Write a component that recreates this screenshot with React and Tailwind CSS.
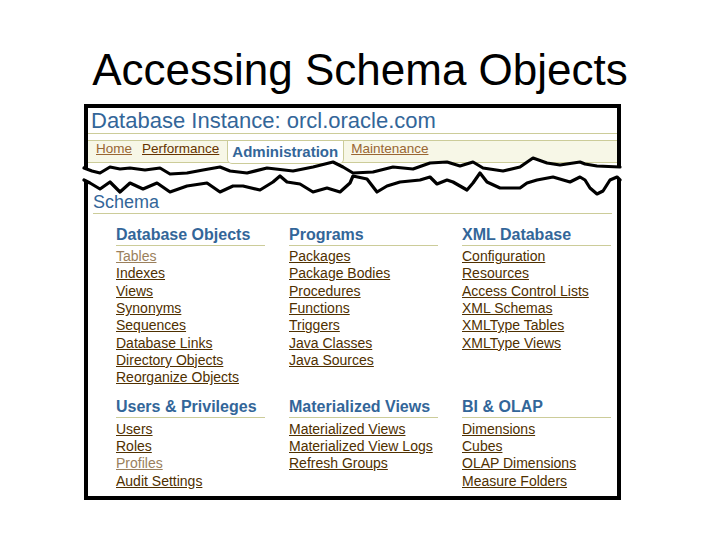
import React from "react";

const topTear = [
  [84, 168], [92, 171], [100, 173], [110, 167], [120, 169], [130, 168], [145, 170], [160, 168],
  [170, 174], [187, 173], [203, 170], [220, 167], [230, 171], [247, 173], [267, 168], [293, 171],
  [313, 167], [333, 162], [343, 167], [353, 173], [373, 172], [393, 167], [413, 169], [430, 163],
  [447, 162], [460, 166], [473, 162], [483, 168], [503, 171], [520, 167], [533, 158], [547, 163],
  [560, 165], [580, 162], [585, 164], [597, 166], [620, 167],
];

const bottomTear = [
  [84, 180], [90, 183], [100, 189], [110, 182], [120, 192], [130, 183], [143, 189], [157, 183],
  [170, 192], [187, 186], [207, 183], [220, 192], [233, 186], [243, 186], [260, 190], [273, 182],
  [280, 176], [287, 182], [300, 184], [313, 192], [327, 188], [340, 192], [350, 183], [353, 176],
  [367, 179], [377, 192], [387, 186], [400, 182], [420, 180], [430, 177], [437, 184], [447, 180],
  [453, 182], [467, 190], [473, 183], [480, 173], [487, 182], [500, 188], [520, 188], [527, 183],
  [537, 180], [553, 177], [570, 182], [580, 177], [585, 180], [590, 188], [597, 194], [603, 191],
  [610, 180], [617, 177], [620, 180],
];

const pts = (arr) => arr.map(([x, y]) => `${x},${y}`).join(" ");

// white gap between the two torn edges
const gapFill = pts([
  [78, 168],
  ...topTear,
  [627, 167],
  [627, 180],
  ...[...bottomTear].reverse(),
  [78, 180],
]);

const sections = [
  {
    title: "Database Objects",
    links: ["Tables", "Indexes", "Views", "Synonyms", "Sequences", "Database Links", "Directory Objects", "Reorganize Objects"],
    visited: ["Tables"],
  },
  {
    title: "Programs",
    links: ["Packages", "Package Bodies", "Procedures", "Functions", "Triggers", "Java Classes", "Java Sources"],
  },
  {
    title: "XML Database",
    links: ["Configuration", "Resources", "Access Control Lists", "XML Schemas", "XMLType Tables", "XMLType Views"],
  },
  {
    title: "Users & Privileges",
    links: ["Users", "Roles", "Profiles", "Audit Settings"],
    visited: ["Profiles"],
  },
  {
    title: "Materialized Views",
    links: ["Materialized Views", "Materialized View Logs", "Refresh Groups"],
  },
  {
    title: "BI & OLAP",
    links: ["Dimensions", "Cubes", "OLAP Dimensions", "Measure Folders"],
  },
];

function LinkGroup({ title, links, visited = [] }) {
  return (
    <div>
      <h3 className="h-[21px] border-b border-[#cccc99] text-[16px] leading-[20px] font-bold text-[#336699]">
        {title}
      </h3>
      <ul className="pt-[2.7px]">
        {links.map((l) => (
          <li key={l} className="text-[14px] leading-[17.3px]">
            <a
              href="#"
              className={`underline ${visited.includes(l) ? "text-[#9a7f5c]" : "text-[#4f3000]"}`}
            >
              {l}
            </a>
          </li>
        ))}
      </ul>
    </div>
  );
}

export default function App() {
  return (
    <div className="w-[720px] h-[540px] bg-white overflow-hidden font-['Liberation_Sans',Arial,sans-serif]">
      {/* slide title */}
      <h1 className="pt-[45px] h-[104px] text-center text-[44px] leading-[50px] text-black">
        Accessing Schema Objects
      </h1>

      {/* screenshot frame */}
      <div className="relative ml-[84px] w-[537px]">
        <div className="h-[72px] border-x-4 border-t-4 border-black">
          <h2 className="h-[26px] pl-[3px] border-b border-[#cccc99] text-[22px] leading-[25px] text-[#336699]">
            Database Instance: orcl.oracle.com
          </h2>
          <div className="mt-[6px] h-[23px] border-y border-[#cccc99] bg-[#f7f7e7] flex items-start text-[13.5px] leading-[16px]">
            <a href="#" className="ml-[8px] underline text-[#996633]">Home</a>
            <a href="#" className="ml-[10px] underline text-[#663300]">Performance</a>
            <div className="ml-[8px] h-[23px] pl-[4px] pr-[5px] pt-[1.5px] bg-white border-x border-b border-[#cccc99] rounded-b-[5px]">
              <span className="text-[15px] leading-[18px] font-bold text-[#336699]">Administration</span>
            </div>
            <a href="#" className="ml-[7px] underline text-[#996633]">Maintenance</a>
          </div>
        </div>

        <div className="h-[324px] border-x-4 border-b-4 border-black px-[5px] pt-[15px]">
          <h2 className="h-[23px] border-b border-[#cccc99] text-[18px] leading-[22px] text-[#336699]">
            Schema
          </h2>
          <div className="mt-[10.5px] ml-[23px] grid grid-cols-[149px_149px_149px] gap-x-[24px] gap-y-[10.6px]">
            {sections.map((s) => (
              <LinkGroup key={s.title} {...s} />
            ))}
          </div>
        </div>

        {/* torn edges */}
        <svg
          className="absolute left-[-6px] top-[50px]"
          width="549"
          height="46"
          viewBox="78 154 549 46"
        >
          <polygon points={gapFill} fill="#ffffff" />
          <polyline points={pts(topTear)} fill="none" stroke="#000" strokeWidth="3.2" strokeLinejoin="round" strokeLinecap="round" />
          <polyline points={pts(bottomTear)} fill="none" stroke="#000" strokeWidth="3.2" strokeLinejoin="round" strokeLinecap="round" />
        </svg>
      </div>
    </div>
  );
}
